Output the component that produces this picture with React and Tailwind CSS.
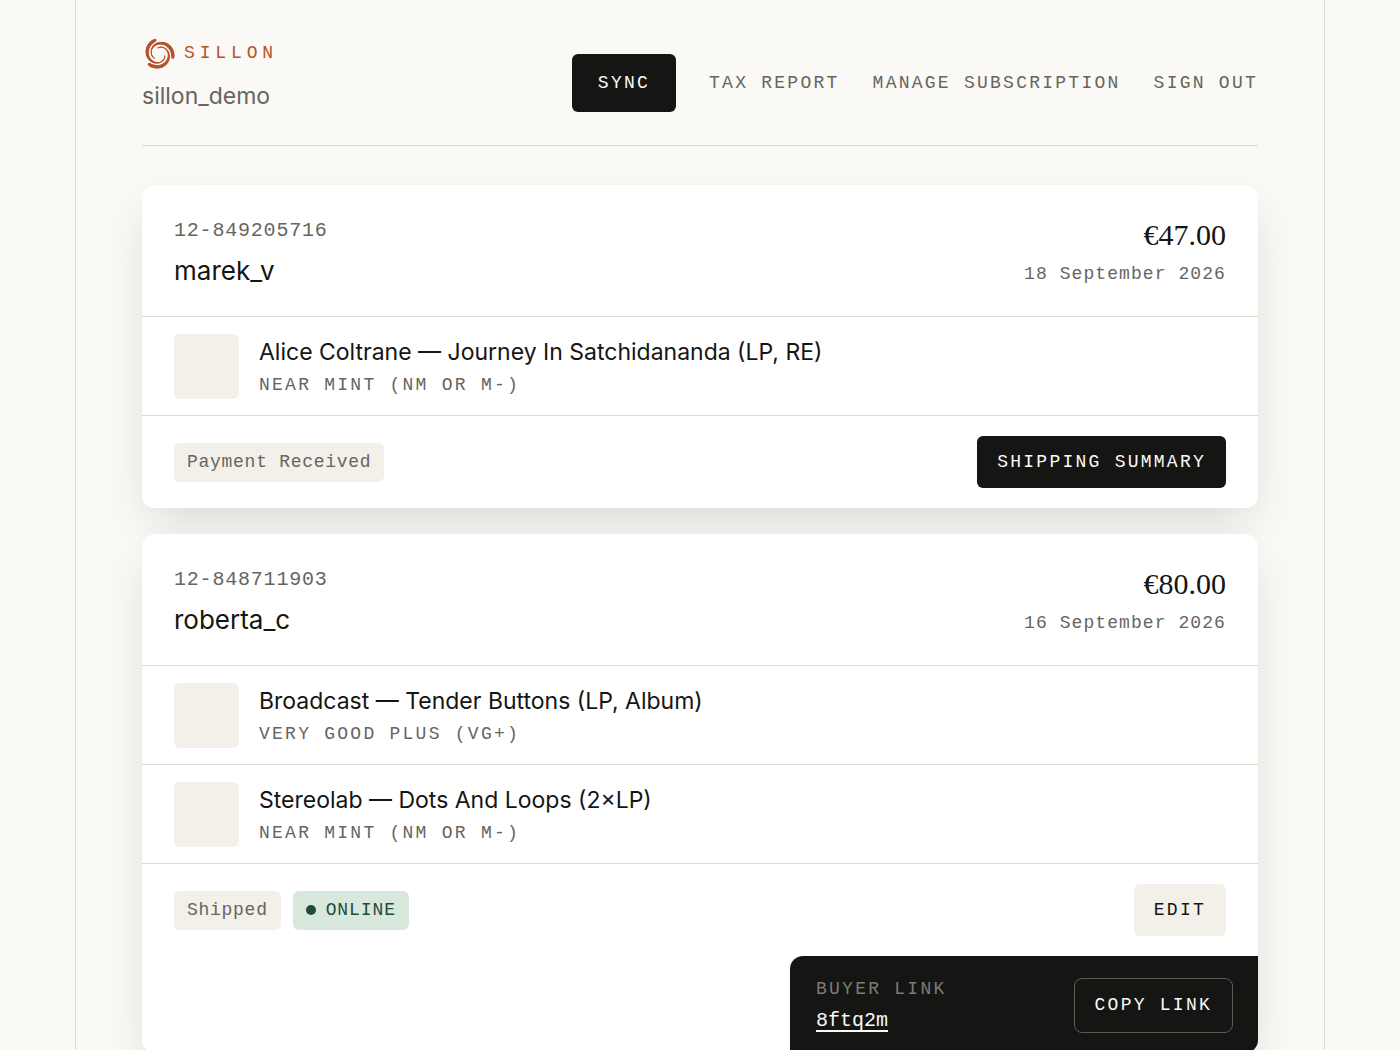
import React from "react";

const orders = [
  {
    id: "12-849205716",
    buyer: "marek_v",
    total: "€47.00",
    date: "18 September 2026",
    items: [
      { title: "Alice Coltrane — Journey In Satchidananda (LP, RE)", condition: "NEAR MINT (NM OR M-)" },
    ],
    status: "Payment Received",
    action: "SHIPPING SUMMARY",
  },
  {
    id: "12-848711903",
    buyer: "roberta_c",
    total: "€80.00",
    date: "16 September 2026",
    items: [
      { title: "Broadcast — Tender Buttons (LP, Album)", condition: "VERY GOOD PLUS (VG+)" },
      { title: "Stereolab — Dots And Loops (2×LP)", condition: "NEAR MINT (NM OR M-)" },
    ],
    status: "Shipped",
    online: true,
    action: "EDIT",
    link: "8ftq2m",
  },
];

// One spiral arm: starts thick on the rim and tapers as it winds towards the hub.
const ARM_STEPS = 24;
const armPoint = (step) => {
  const t = step / ARM_STEPS;
  const angle = ((-13 + t * 235) * Math.PI) / 180;
  const radius = 14.2 - 8 * t;
  return [17 + radius * Math.cos(angle), 17 - radius * Math.sin(angle)];
};
const armSegments = Array.from({ length: ARM_STEPS }, (_, i) => {
  const [x1, y1] = armPoint(i);
  const [x2, y2] = armPoint(i + 1);
  const t = i / ARM_STEPS;
  return { x1, y1, x2, y2, width: t < 0.2 ? 3.3 : Math.max(1.1, 3.3 - (t - 0.2) * 4.4) };
});

function Logo() {
  return (
    <svg viewBox="0 0 34 34" className="size-[34px] shrink-0" stroke="currentColor" strokeLinecap="round" aria-hidden="true">
      {[0, 120, 240].map((angle) => (
        <g key={angle} transform={`rotate(${angle} 17 17)`}>
          {armSegments.map((s, i) => (
            <line key={i} x1={s.x1} y1={s.y1} x2={s.x2} y2={s.y2} strokeWidth={s.width} />
          ))}
        </g>
      ))}
    </svg>
  );
}

function Order({ order }) {
  return (
    <article className="overflow-hidden rounded-[13px] bg-white shadow-[0_20px_48px_-8px_rgba(20,20,15,0.14)]">
      <div className="flex items-start justify-between px-8 pt-8 pb-[25px]">
        <div>
          <p className="font-['Liberation_Mono',monospace] text-[20px] leading-7 tracking-[0.04em] text-[#66655f]">{order.id}</p>
          <h2 className="mt-1.5 text-[26px] leading-10">{order.buyer}</h2>
        </div>
        <div className="text-right">
          <p className="font-['Liberation_Serif',serif] text-[30px] leading-9">{order.total}</p>
          <p className="mt-[7px] font-['Liberation_Mono',monospace] text-[18px] leading-7 tracking-[0.06em] text-[#66655f]">{order.date}</p>
        </div>
      </div>
      <ul>
        {order.items.map((item) => (
          <li key={item.title} className="flex items-start gap-5 border-t border-[#dcdbd0] px-8 pt-[17px] pb-4">
            <div className="size-[65px] shrink-0 rounded-md bg-[#f3f0ea]" />
            <div className="pt-0.5">
              <h3 className="text-[23px] leading-8">{item.title}</h3>
              <p className="mt-1 font-['Liberation_Mono',monospace] text-[18px] leading-[26px] tracking-[0.125em] text-[#66655f]">{item.condition}</p>
            </div>
          </li>
        ))}
      </ul>
      <div className="flex items-center justify-between border-t border-[#dcdbd0] px-8 py-5 font-['Liberation_Mono',monospace] text-[18px]">
        <div className="flex items-center gap-3">
          <span className="rounded-md bg-[#f3f0ea] px-[13px] leading-[39px] tracking-[0.04em] text-[#66655f]">{order.status}</span>
          {order.online && (
            <span className="flex items-center gap-2.5 rounded-md bg-[#d8e8dd] px-[13px] leading-[39px] tracking-[0.05em] text-[#1f4d38]">
              <span className="size-2.5 rounded-full bg-[#1f4d38]" />
              ONLINE
            </span>
          )}
        </div>
        {order.link ? (
          <button type="button" className="h-[52px] rounded-md bg-[#f3f0ea] px-5 tracking-[0.125em]">{order.action}</button>
        ) : (
          <button type="button" className="h-[52px] rounded-md bg-[#151513] px-5 tracking-[0.125em] text-[#fafaf6]">{order.action}</button>
        )}
      </div>
      {order.link && (
        <div className="ml-auto flex max-w-[468px] items-center justify-between rounded-tl-[13px] bg-[#151513] pt-[17px] pr-[25px] pb-4 pl-[26px] font-['Liberation_Mono',monospace] text-[#fafaf6]">
          <div>
            <p className="text-[18px] leading-8 tracking-[0.125em] text-[#7d7b73]">BUYER LINK</p>
            <a href="#buyer-link" className="block text-[20px] leading-8 underline underline-offset-4">{order.link}</a>
          </div>
          <button type="button" className="h-[55px] rounded-lg border border-[#5a5a57] px-5 text-[18px] tracking-[0.125em]">COPY LINK</button>
        </div>
      )}
    </article>
  );
}

export default function App() {
  return (
    <div className="min-h-screen bg-[#faf9f5] font-['Inter',sans-serif] text-[#151513]">
      <div className="mx-auto min-h-screen max-w-[1250px] border-x border-[#dcdbd0] px-[66px] pb-16">
        <header className="flex items-end justify-between border-b border-[#dcdbd0] pt-[37px] pb-[33px]">
          <div>
            <div className="flex h-[33px] items-center gap-2 text-[#b5532a]">
              <Logo />
              <span className="font-['Liberation_Mono',monospace] text-[18px] font-medium tracking-[0.27em]">SILLON</span>
            </div>
            <p className="mt-2.5 text-[23px] leading-8 text-[#66655f]">sillon_demo</p>
          </div>
          <nav className="flex items-center gap-[33px] font-['Liberation_Mono',monospace] text-[18px] tracking-[0.125em] text-[#66655f]">
            <button type="button" className="h-[58px] rounded-md bg-[#151513] px-[26px] tracking-[0.125em] text-[#fafaf6]">SYNC</button>
            <a href="#tax-report">TAX REPORT</a>
            <a href="#subscription">MANAGE SUBSCRIPTION</a>
            <a href="#sign-out">SIGN OUT</a>
          </nav>
        </header>
        <main className="mt-[39px] flex flex-col gap-[26px]">
          {orders.map((order) => (
            <Order key={order.id} order={order} />
          ))}
        </main>
      </div>
    </div>
  );
}
